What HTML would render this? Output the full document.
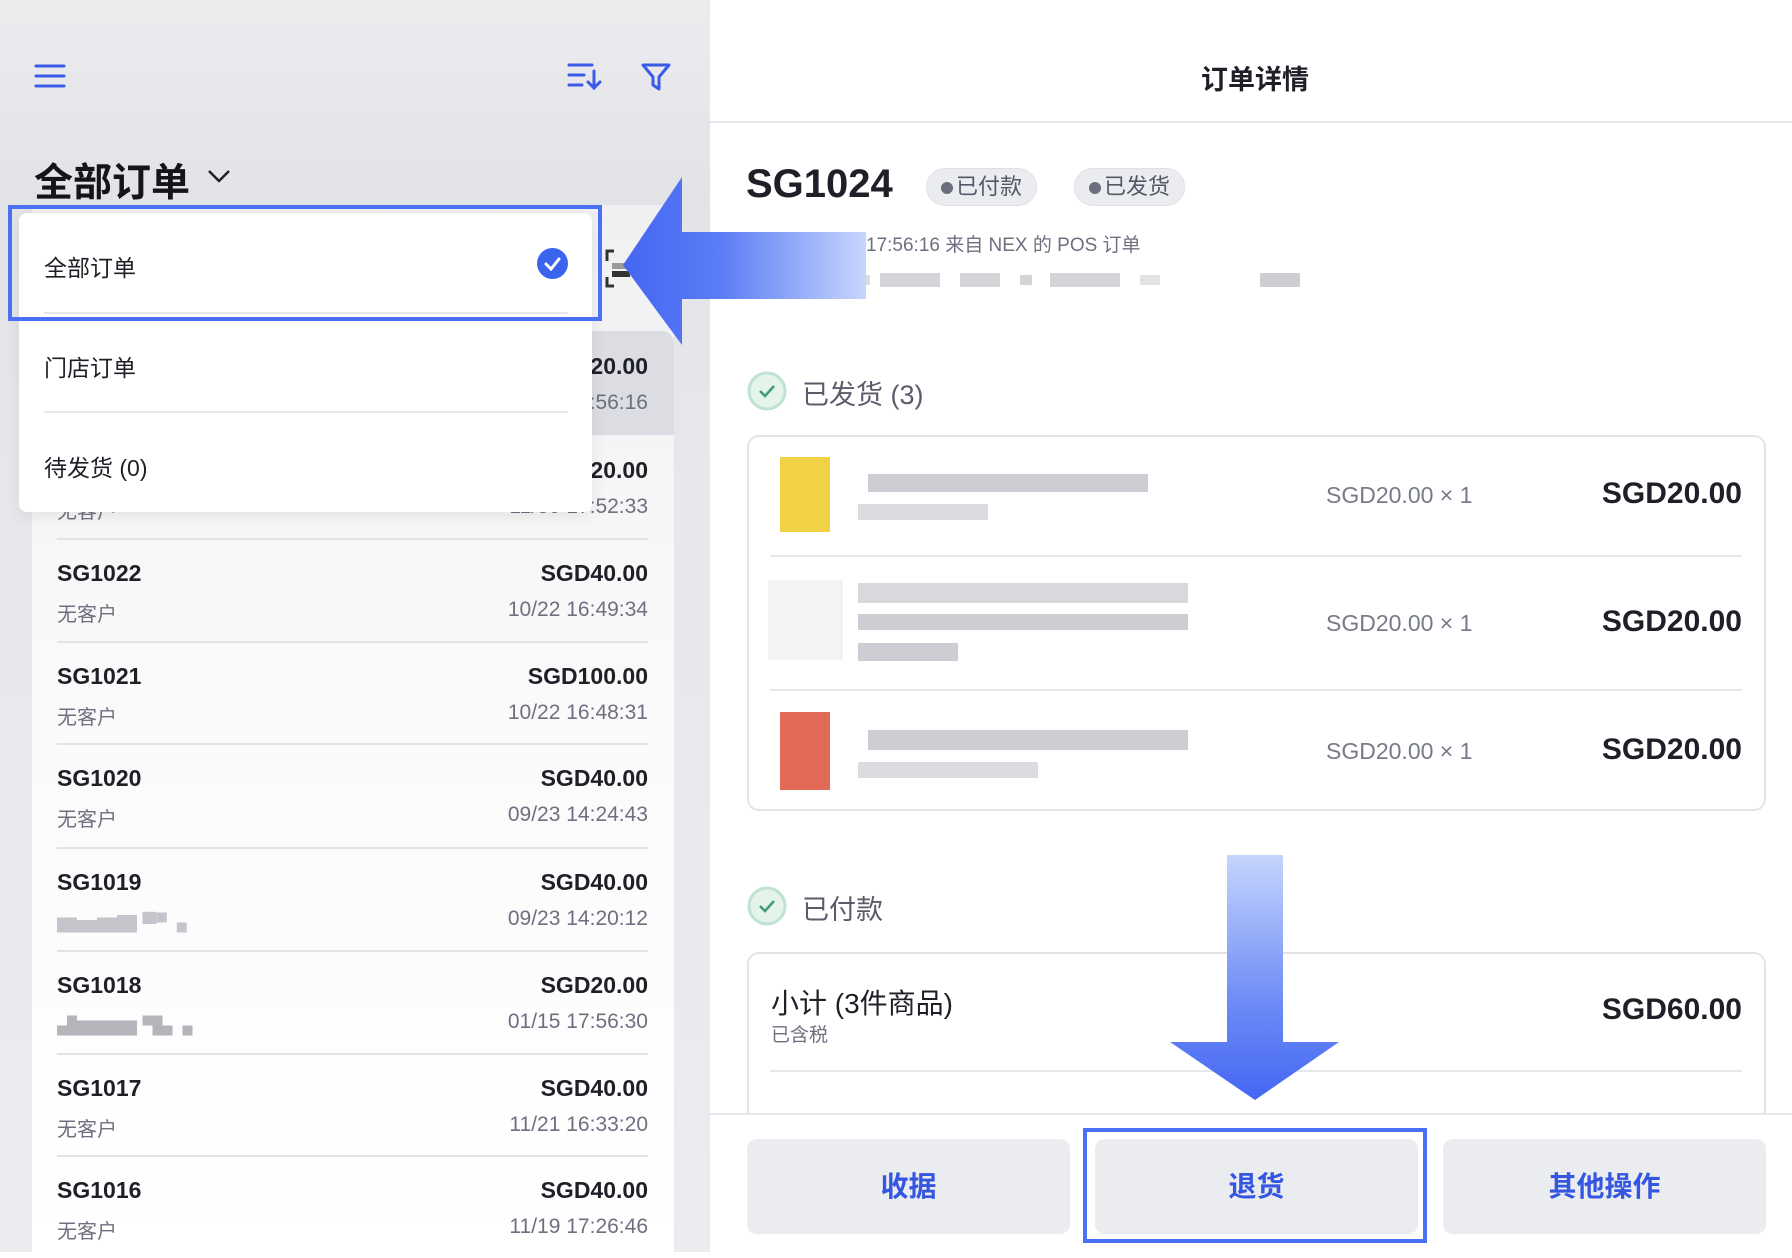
<!DOCTYPE html>
<html><head><meta charset="utf-8"><style>
*{margin:0;padding:0;box-sizing:border-box}
body{width:1792px;height:1252px;overflow:hidden;position:relative;background:#fff;font-family:"Liberation Sans","Noto Sans CJK SC",sans-serif;color:#1c1d24}
.a{position:absolute}
.left{left:0;top:0;width:710px;height:1252px;background:linear-gradient(#ececef,#e2e3e7 200px,#e6e7eb 400px,#ebecef)}
.list{left:32px;top:205px;width:642px;height:1047px;background:linear-gradient(#f0f0f2,#fafafa 500px,#fff)}
.row{position:absolute;left:57px;width:591px;height:103px}
.row .t{position:absolute;left:0;top:22px;font-size:23px;font-weight:bold;color:#1e1f27}
.row .p{position:absolute;right:0;top:22px;font-size:23px;font-weight:bold;color:#1e1f27}
.row .s{position:absolute;left:0;top:60px;font-size:20px;color:#6e7080}
.row .d{position:absolute;right:0;top:60px;font-size:21px;color:#6e7080}
.row .ln{position:absolute;left:0;right:0;top:0;height:2px;background:#e2e3e7}
.dd{left:19px;top:213px;width:573px;height:299px;background:#fff;border-radius:8px;box-shadow:0 4px 16px rgba(0,0,0,.08)}
.dd div.i{position:absolute;left:25px;font-size:23px;color:#1e1f27}
.sep{position:absolute;left:25px;width:524px;height:2px;background:#e6e7ea}
.btn{position:absolute;top:1139px;height:95px;width:323px;background:#ebecf0;border-radius:10px;color:#3556e0;font-size:28px;font-weight:bold;text-align:center;line-height:95px}
.qty{position:absolute;left:1326px;font-size:23px;color:#777a88}
.pr{position:absolute;right:50px;font-size:30px;font-weight:bold;color:#1e1f27}
.blk{position:absolute;background:#b8b9c0}
.badge{position:absolute;top:168px;height:38px;border-radius:19px;background:#ebecf0;border:1px solid #dfe0e5;font-size:22px;color:#555766;line-height:36px;padding:0 14px;white-space:nowrap}
</style></head><body>
<div class="a left"></div>
<svg class="a" style="left:34px;top:63px" width="32" height="26"><g stroke="#3a5ae8" stroke-width="3" stroke-linecap="round"><line x1="2" y1="3" x2="30" y2="3"/><line x1="2" y1="13" x2="30" y2="13"/><line x1="2" y1="23" x2="30" y2="23"/></g></svg>
<svg class="a" style="left:566px;top:61px" width="36" height="30"><g stroke="#3a5ae8" stroke-width="3" stroke-linecap="round" fill="none"><line x1="3" y1="4" x2="26" y2="4"/><line x1="3" y1="14" x2="18" y2="14"/><line x1="3" y1="24" x2="16" y2="24"/><line x1="28" y1="10" x2="28" y2="27"/><polyline points="22,21 28,27 34,21"/></g></svg>
<svg class="a" style="left:640px;top:61px" width="32" height="32"><path d="M3 4 H29 L19 16 V28 L13 24 V16 Z" stroke="#3a5ae8" stroke-width="3" fill="none" stroke-linejoin="round"/></svg>
<div class="a" style="left:34px;top:152px;font-size:39px;font-weight:bold;color:#14151b">全部订单</div>
<svg class="a" style="left:206px;top:167px" width="26" height="18"><polyline points="3,4 13,14 23,4" stroke="#222" stroke-width="2.5" fill="none"/></svg>
<div class="a list"></div>
<div class="a" style="left:32px;top:331px;width:642px;height:104px;background:#dcdde2;border-radius:0 12px 0 0"></div>
<svg class="a" style="left:604px;top:249px" width="26" height="40"><g stroke="#333" stroke-width="3" fill="none"><polyline points="10,2 3,2 3,12"/><polyline points="3,28 3,37 10,37"/></g><rect x="8" y="14" width="18" height="6" fill="#999"/><rect x="8" y="22" width="18" height="6" fill="#333"/></svg>
<div class="row" style="top:331px"><div class="t">SG1024</div><div class="p">SGD20.00</div><div class="s">无客户</div><div class="d">01/15 17:56:16</div></div>
<div class="row" style="top:435px"><div class="t">SG1023</div><div class="p">SGD20.00</div><div class="s">无客户</div><div class="d">11/30 17:52:33</div></div>
<div class="row" style="top:538px"><div class="ln"></div><div class="t">SG1022</div><div class="p">SGD40.00</div><div class="s">无客户</div><div class="d">10/22 16:49:34</div></div>
<div class="row" style="top:641px"><div class="ln"></div><div class="t">SG1021</div><div class="p">SGD100.00</div><div class="s">无客户</div><div class="d">10/22 16:48:31</div></div>
<div class="row" style="top:743px"><div class="ln"></div><div class="t">SG1020</div><div class="p">SGD40.00</div><div class="s">无客户</div><div class="d">09/23 14:24:43</div></div>
<div class="row" style="top:847px"><div class="ln"></div><div class="t">SG1019</div><div class="p">SGD40.00</div><div class="s" style="color:#c4c5cb">▆▅▆▇ ▀▘▖</div><div class="d">09/23 14:20:12</div></div>
<div class="row" style="top:950px"><div class="ln"></div><div class="t">SG1018</div><div class="p">SGD20.00</div><div class="s" style="color:#b4b5bb">▟▆▆▆ ▜▖▖</div><div class="d">01/15 17:56:30</div></div>
<div class="row" style="top:1053px"><div class="ln"></div><div class="t">SG1017</div><div class="p">SGD40.00</div><div class="s">无客户</div><div class="d">11/21 16:33:20</div></div>
<div class="row" style="top:1155px"><div class="ln"></div><div class="t">SG1016</div><div class="p">SGD40.00</div><div class="s">无客户</div><div class="d">11/19 17:26:46</div></div>
<div class="a dd">
<div class="i" style="top:36px">全部订单</div>
<div style="position:absolute;left:518px;top:35px;width:31px;height:31px;border-radius:50%;background:#3b64ee"><svg width="31" height="31"><polyline points="9,16 14,21 22,11" stroke="#fff" stroke-width="3" fill="none" stroke-linecap="round"/></svg></div>
<div class="sep" style="top:99px"></div>
<div class="i" style="top:136px">门店订单</div>
<div class="sep" style="top:198px"></div>
<div class="i" style="top:236px">待发货 (0)</div>
</div>
<div class="a" style="left:8px;top:205px;width:594px;height:116px;border:4px solid #4a70f5"></div>
<div class="a" style="left:710px;top:0;width:1082px;height:123px;border-bottom:2px solid #e6e7ea"></div>
<div class="a" style="left:1255px;top:58px;transform:translateX(-50%);font-size:27px;font-weight:bold;color:#1e1f27">订单详情</div>
<div class="a" style="left:746px;top:162px;font-size:40px;font-weight:bold;color:#1e1f27">SG1024</div>
<div class="badge" style="left:926px"><span style="display:inline-block;width:12px;height:12px;border-radius:50%;background:#6b6e7c;margin-right:3px"></span>已付款</div>
<div class="badge" style="left:1074px"><span style="display:inline-block;width:12px;height:12px;border-radius:50%;background:#6b6e7c;margin-right:3px"></span>已发货</div>
<div class="a" style="left:866px;top:230px;font-size:19px;color:#6e7080">17:56:16 来自 NEX 的 POS 订单</div>
<div class="blk" style="left:830px;top:275px;width:40px;height:10px;opacity:.5"></div>
<div class="blk" style="left:880px;top:273px;width:60px;height:14px;opacity:.6"></div>
<div class="blk" style="left:960px;top:273px;width:40px;height:14px;opacity:.6"></div>
<div class="blk" style="left:1020px;top:275px;width:12px;height:10px;opacity:.6"></div>
<div class="blk" style="left:1050px;top:273px;width:70px;height:14px;opacity:.6"></div>
<div class="blk" style="left:1140px;top:275px;width:20px;height:10px;opacity:.4"></div>
<div class="blk" style="left:1260px;top:273px;width:40px;height:14px;opacity:.7"></div>
<svg class="a" style="left:747px;top:371px" width="40" height="40"><circle cx="20" cy="20" r="18" fill="#e4f3ec" stroke="#bfe3d1" stroke-width="3"/><polyline points="13,20 18,25 27,15" stroke="#3f9e72" stroke-width="2.5" fill="none"/></svg>
<div class="a" style="left:802px;top:373px;font-size:27px;color:#5a5c6a">已发货 (3)</div>
<div class="a" style="left:747px;top:435px;width:1019px;height:376px;border:2px solid #e3e4e8;border-radius:12px"></div>
<div class="a" style="left:770px;top:555px;width:972px;height:2px;background:#e6e7ea"></div>
<div class="a" style="left:770px;top:689px;width:972px;height:2px;background:#e6e7ea"></div>
<div class="a" style="left:780px;top:457px;width:50px;height:75px;background:#f0d244"></div>
<div class="a" style="left:768px;top:580px;width:75px;height:80px;background:#f3f3f5"></div>
<div class="a" style="left:780px;top:712px;width:50px;height:78px;background:#e06a55"></div>
<div class="blk" style="left:868px;top:474px;width:280px;height:18px;opacity:.7"></div>
<div class="blk" style="left:858px;top:504px;width:130px;height:16px;opacity:.5"></div>
<div class="blk" style="left:858px;top:583px;width:330px;height:20px;opacity:.55"></div>
<div class="blk" style="left:858px;top:614px;width:330px;height:16px;opacity:.7"></div>
<div class="blk" style="left:858px;top:643px;width:100px;height:18px;opacity:.7"></div>
<div class="blk" style="left:868px;top:730px;width:320px;height:20px;opacity:.7"></div>
<div class="blk" style="left:858px;top:762px;width:180px;height:16px;opacity:.5"></div>
<div class="qty" style="top:482px">SGD20.00 × 1</div><div class="pr" style="top:477px">SGD20.00</div>
<div class="qty" style="top:610px">SGD20.00 × 1</div><div class="pr" style="top:605px">SGD20.00</div>
<div class="qty" style="top:738px">SGD20.00 × 1</div><div class="pr" style="top:733px">SGD20.00</div>
<svg class="a" style="left:747px;top:886px" width="40" height="40"><circle cx="20" cy="20" r="18" fill="#e4f3ec" stroke="#bfe3d1" stroke-width="3"/><polyline points="13,20 18,25 27,15" stroke="#3f9e72" stroke-width="2.5" fill="none"/></svg>
<div class="a" style="left:802px;top:888px;font-size:27px;color:#5a5c6a">已付款</div>
<div class="a" style="left:747px;top:952px;width:1019px;height:200px;border:2px solid #e3e4e8;border-radius:12px"></div>
<div class="a" style="left:771px;top:982px;font-size:28px;color:#1e1f27">小计 (3件商品)</div>
<div class="a" style="left:771px;top:1020px;font-size:19px;color:#6e7080">已含税</div>
<div class="a" style="right:50px;top:993px;font-size:30px;font-weight:bold;color:#1e1f27">SGD60.00</div>
<div class="a" style="left:770px;top:1070px;width:972px;height:2px;background:#e6e7ea"></div>
<div class="a" style="left:710px;top:1113px;width:1082px;height:139px;background:#fff;border-top:2px solid #e6e7ea"></div>
<div class="btn" style="left:747px">收据</div>
<div class="btn" style="left:1095px">退货</div>
<div class="btn" style="left:1443px">其他操作</div>
<div class="a" style="left:1083px;top:1128px;width:344px;height:115px;border:4px solid #4a70f5"></div>
<svg class="a" style="left:0;top:0" width="1792" height="1252">
<defs>
<linearGradient id="g1" x1="0" x2="1" y1="0" y2="0"><stop offset="0" stop-color="#4466f3"/><stop offset="0.4" stop-color="#5a7cf5"/><stop offset="1" stop-color="#c8d6fc"/></linearGradient>
<linearGradient id="g2" x1="0" x2="0" y1="0" y2="1"><stop offset="0" stop-color="#c6d5fc"/><stop offset="0.6" stop-color="#6d8cf6"/><stop offset="1" stop-color="#4466f3"/></linearGradient>
</defs>
<polygon points="623,265 682,177 682,232 866,232 866,299 682,299 682,345" fill="url(#g1)"/>
<polygon points="1227,855 1283,855 1283,1042 1339,1042 1255,1100 1170,1042 1227,1042" fill="url(#g2)"/>
</svg>
</body></html>
